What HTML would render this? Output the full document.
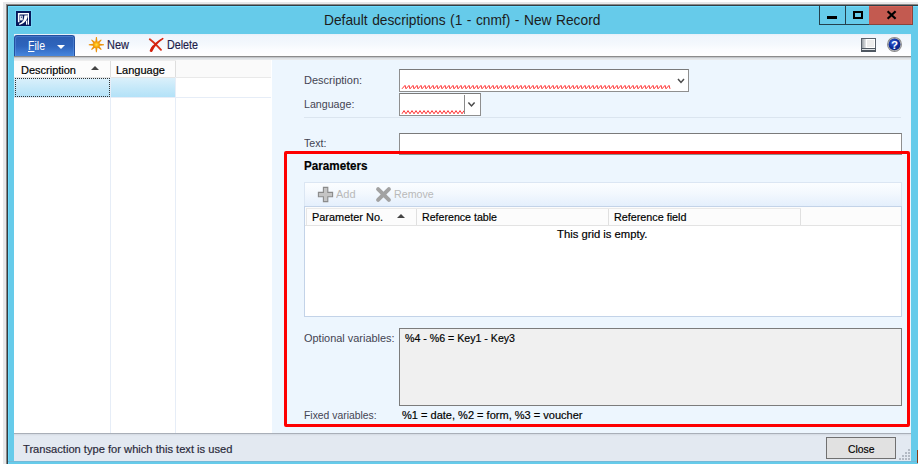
<!DOCTYPE html>
<html>
<head>
<meta charset="utf-8">
<title>Default descriptions (1 - cnmf) - New Record</title>
<style>
html,body{margin:0;padding:0;}
body{width:918px;height:466px;position:relative;overflow:hidden;background:#fff;
  font-family:"Liberation Sans",sans-serif;font-size:11px;color:#000;-webkit-text-stroke:0.18px;}
.a{position:absolute;}
.t{position:absolute;white-space:nowrap;line-height:14px;height:14px;}
#f1{left:3px;top:2px;width:915px;height:462px;background:#e7e8ea;}
#f2{left:6px;top:4px;width:912px;height:460px;background:#8c8987;}
#f3{left:7px;top:5px;width:911px;height:459px;background:#2e3d45;}
#f4{left:8px;top:6px;width:910px;height:458px;background:#6edcff;}
#f5{left:9px;top:7px;width:909px;height:457px;background:#66cbea;}
#fb{left:8px;top:461px;width:910px;height:1px;background:#74b9d8;}
#content{left:14px;top:34px;width:897px;height:427px;background:#fff;}
/* title bar */
#appicon{left:16px;top:11px;width:15px;height:15px;background:#0b1a5c;}
#t_title{word-spacing:0.7px;left:324px;top:10.8px;font-size:14.5px;line-height:18px;height:18px;color:#1c1c1c;}
.wb{position:absolute;top:6px;height:19px;border:1px solid #24414d;border-top:none;box-sizing:border-box;}
#wmin{left:819px;width:27px;}
#wmax{left:845px;width:25px;}
#wclose{left:869px;width:44px;background:#c35a50;border-color:#8a443c;border-left:none;box-shadow:inset 0 1px 0 #d66257,inset -1px 0 0 #d66257;}
/* toolbar */
#toolbar{left:14px;top:34px;width:897px;height:22px;background:linear-gradient(to bottom,#e6eff9 0,#eff5fc 2px,#f4f8fd 45%,#fcfdff 75%,#fff 100%);}
#tbshadow{left:14px;top:56px;width:897px;height:4px;background:linear-gradient(to bottom,#8c8c8c 0,#8c8c8c 1px,#c4c6c9 1px,#c4c6c9 2px,#dfe2e5 2px,#dfe2e5 3px,#e6e8ea 3px);z-index:3;}
#file{left:14px;top:35px;width:61px;height:21px;border-radius:3px 3px 0 0;box-sizing:border-box;border:1px solid #2350a0;border-bottom:none;
  background:linear-gradient(to bottom,#2c5eb2 0,#2e64bc 50%,#3f7cd4 85%,#4686dc 100%);box-shadow:inset 1px 1px 0 rgba(120,170,240,.35),inset -1px 0 0 rgba(120,170,240,.35);}
#t_file{font-size:12px;left:27.8px;top:38.60px;color:#fff;}
#t_new{font-size:12px;left:107.4px;top:37.80px;color:#1e1e4a;}
#t_delete{font-size:12px;left:167px;top:37.80px;color:#1e1e4a;}
/* left grid */
#lgrid{left:14px;top:59px;width:257px;height:374px;background:#fff;}
#lhead{left:14px;top:60px;width:161px;height:17px;background:#fcfcfc;border-bottom:1px solid #e4e4e4;}
#lhead2{left:176px;top:60px;width:95px;height:17px;background:#fafafa;border-bottom:1px solid #e9e9e9;}
.vl{position:absolute;width:1px;background:#e6edf7;}
.hl{position:absolute;height:1px;background:#e6edf7;}
#selrow{left:14px;top:78px;width:161px;height:19px;background:linear-gradient(to bottom,#dbf0fb 0,#c4e8f9 55%,#b3e2f8 100%);}
#focus{left:15px;top:78px;width:95px;height:19px;box-sizing:border-box;border:1px dotted #333;}
/* right pane */
#rpane{left:272px;top:59px;width:639px;height:374px;background:#edf6fe;}
.lbl{color:#444452;-webkit-text-stroke:0;}
#t_title,#t_add,#t_remove,#t_file{-webkit-text-stroke:0;}
.inp{position:absolute;box-sizing:border-box;background:#fff;border:1px solid #8f8f8f;border-top-color:#7a7a7a;}
#redbox{left:284px;top:151px;width:626px;height:276px;box-sizing:border-box;border:3px solid #fe0000;border-radius:2px;}
#ptool{left:304px;top:182px;width:598px;height:25px;box-sizing:border-box;border:1px solid #dbe6f3;border-bottom-color:#b9cde6;
  background:linear-gradient(to bottom,#fbfdff 0,#f3f8fe 45%,#e4effc 100%);}
#pgrid{left:304px;top:206px;width:598px;height:111px;box-sizing:border-box;border:1px solid #c3d3e8;background:#fff;}
#phead{left:305px;top:207px;width:596px;height:18px;background:#fcfcfc;border-bottom:1px solid #e3e3e3;}
.hv{position:absolute;top:208px;height:17px;width:1px;background:#e0e0e0;}
#opt{left:399px;top:328px;width:503px;height:78px;background:#f0f0f0;border:1px solid #7c7c7c;box-sizing:border-box;}
/* status bar */
#sline{left:14px;top:433px;width:897px;height:1px;background:#a9afb8;}
#status{left:14px;top:434px;width:897px;height:27px;background:linear-gradient(to bottom,#d3d9e2 0,#e3e9f1 2px,#e3e9f1 100%);}
#closebtn{left:826px;top:437px;width:70px;height:22px;box-sizing:border-box;border:1px solid #707070;background:#e1e1e1;}
#botwhite{left:0;top:464px;width:918px;height:2px;background:#fff;}
/*SCALES*/
#t_title{transform-origin:0 0;transform:scaleX(0.9499);}
#t_file{transform-origin:0 0;transform:scaleX(0.8781);}
#t_new{transform-origin:0 0;transform:scaleX(0.9119);}
#t_delete{transform-origin:0 0;transform:scaleX(0.8937);}
#t_hdesc{transform-origin:0 0;transform:scaleX(0.9994);}
#t_hlang{transform-origin:0 0;transform:scaleX(1.0010);}
#t_ldesc{transform-origin:0 0;transform:scaleX(1.0004);}
#t_llang{transform-origin:0 0;transform:scaleX(0.9683);}
#t_ltext{transform-origin:0 0;transform:scaleX(0.9684);}
#t_params{transform-origin:0 0;transform:scaleX(0.9338);}
#t_add{transform-origin:0 0;transform:scaleX(1.0011);}
#t_remove{transform-origin:0 0;transform:scaleX(0.9703);}
#t_pno{transform-origin:0 0;transform:scaleX(0.9926);}
#t_rtab{transform-origin:0 0;transform:scaleX(0.9656);}
#t_rfld{transform-origin:0 0;transform:scaleX(0.9797);}
#t_empty{transform-origin:0 0;transform:scaleX(1.0233);}
#t_lopt{transform-origin:0 0;transform:scaleX(0.9944);}
#t_optv{transform-origin:0 0;transform:scaleX(0.9646);}
#t_lfix{transform-origin:0 0;transform:scaleX(0.9423);}
#t_fixv{transform-origin:0 0;transform:scaleX(1.0023);}
#t_status{transform-origin:0 0;transform:scaleX(1.0123);}
#t_close{transform-origin:0 0;transform:scaleX(0.9422);}
/*ENDSCALES*/
</style>
</head>
<body>
<div class="a" id="f1"></div><div class="a" id="f2"></div><div class="a" id="f3"></div><div class="a" id="f4"></div><div class="a" id="f5"></div>
<div class="a" id="content"></div>

<!-- title bar -->
<div class="a" id="appicon"></div>
<div class="t" id="t_title">Default descriptions (1 - cnmf) - New Record</div>
<div class="wb" id="wmin"></div>
<div class="wb" id="wmax"></div>
<div class="wb" id="wclose"></div>

<!-- toolbar -->
<div class="a" id="toolbar"></div>
<div class="a" id="tbshadow"></div>
<div class="a" id="file"></div>
<div class="t" id="t_file"><u>F</u>ile</div>
<div class="t" id="t_new">New</div>
<div class="t" id="t_delete">Delete</div>

<!-- left grid -->
<div class="a" id="lgrid"></div>
<div class="a" id="lhead"></div>
<div class="a" id="lhead2"></div>
<div class="a" id="selrow"></div>
<div class="a" id="focus"></div>
<div class="t" id="t_hdesc" style="left:21px;top:62.85px;">Description</div>
<div class="t" id="t_hlang" style="left:116px;top:62.85px;">Language</div>

<!-- right pane -->
<div class="a" id="rpane"></div>
<div class="t lbl" id="t_ldesc" style="left:304px;top:72.95px;">Description:</div>
<div class="t lbl" id="t_llang" style="left:304px;top:96.85px;">Language:</div>
<div class="inp" style="left:399px;top:69px;width:290px;height:23px;"></div>
<div class="inp" style="left:399px;top:93px;width:82px;height:23px;"></div>
<div class="hl" style="left:304px;top:117px;width:597px;background:#dbe5ef;"></div>
<div class="t lbl" id="t_ltext" style="left:304px;top:136.35px;">Text:</div>
<div class="inp" style="left:399px;top:133px;width:503px;height:22px;"></div>
<div class="a" id="redbox"></div>
<div class="t" id="t_params" style="left:304px;top:159px;font-size:12.5px;font-weight:bold;color:#000;">Parameters</div>
<div class="a" id="ptool"></div>
<div class="t" id="t_add" style="left:336px;top:186.75px;color:#b9b9b9;">Add</div>
<div class="t" id="t_remove" style="left:394px;top:186.95px;color:#b9b9b9;">Remove</div>
<div class="a" id="pgrid"></div>
<div class="a" id="phead"></div>
<div class="hv" style="left:416px;"></div>
<div class="hv" style="left:608px;"></div>
<div class="hv" style="left:800px;"></div>
<div class="t" id="t_pno" style="left:312px;top:210.2px;">Parameter No.</div>
<div class="t" id="t_rtab" style="left:422px;top:210.2px;">Reference table</div>
<div class="t" id="t_rfld" style="left:614px;top:210.2px;">Reference field</div>
<div class="t" id="t_empty" style="left:557px;top:226.95px;">This grid is empty.</div>
<div class="t lbl" id="t_lopt" style="left:304px;top:330.75px;">Optional variables:</div>
<div class="a" id="opt"></div>
<div class="t" id="t_optv" style="left:405px;top:330.85px;">%4 - %6 = Key1 - Key3</div>
<div class="t lbl" id="t_lfix" style="left:304px;top:407.85px;">Fixed variables:</div>
<div class="t" id="t_fixv" style="left:402px;top:407.85px;">%1 = date, %2 = form, %3 = voucher</div>


<!-- app icon glyph -->
<svg class="a" style="left:16px;top:11px;box-shadow:0 0 0 1px rgba(125,222,252,.55)" width="15" height="15" viewBox="0 0 15 15">
 <rect x="0" y="0" width="15" height="15" fill="#06185a"/>
 <path d="M1.9 1.9H13V9H12V3.5H3.5V11.2H1.9Z" fill="#fff"/>
 <rect x="3.9" y="4.6" width="2.9" height="4.8" fill="#e4e8f1"/>
 <rect x="4.9" y="5.6" width="1" height="1.2" fill="#1b2c6c"/>
 <path d="M11.9 4.2C11.5 8.8 8.6 12.6 3.3 13.9L3 12.7C6.6 11.4 8.4 8.8 8.3 4.6Z" fill="#fff"/>
 <rect x="10" y="9.6" width="1.2" height="4.1" fill="#fff"/>
 <rect x="11.8" y="9" width="1.2" height="4.7" fill="#fff"/>
</svg>
<!-- window button glyphs -->
<div class="a" style="left:827px;top:16px;width:10px;height:3px;background:#000"></div>
<div class="a" style="left:853px;top:11px;width:10px;height:8px;box-sizing:border-box;border:2px solid #000"></div>
<svg class="a" style="left:886px;top:10px" width="12" height="10" viewBox="0 0 12 10">
 <path d="M1.6 1.2L9.6 8.8M9.6 1.2L1.6 8.8" stroke="#000" stroke-width="2.2" fill="none"/>
</svg>
<!-- File arrow -->
<svg class="a" style="left:57px;top:45px" width="8" height="4" viewBox="0 0 8 4"><path d="M0 0H8L4 4Z" fill="#fff"/></svg>
<!-- New icon -->
<svg class="a" style="left:88px;top:36px" width="17" height="17" viewBox="0 0 17 17">
 <defs><radialGradient id="sg" cx="50%" cy="50%" r="50%"><stop offset="0" stop-color="#ffe24d"/><stop offset=".5" stop-color="#fdb913"/><stop offset="1" stop-color="#ee9408"/></radialGradient></defs>
 <g transform="translate(8.4 8.7)" fill="#ec9208">
  <path d="M-0.45 -7.6L0.45 -7.6L1.3 -1.5L-1.3 -1.5Z"/>
  <path d="M-0.45 -7.6L0.45 -7.6L1.3 -1.5L-1.3 -1.5Z" transform="rotate(90)"/>
  <path d="M-0.45 -7.6L0.45 -7.6L1.3 -1.5L-1.3 -1.5Z" transform="rotate(180)"/>
  <path d="M-0.45 -7.6L0.45 -7.6L1.3 -1.5L-1.3 -1.5Z" transform="rotate(270)"/>
  <path d="M-0.45 -7L0.45 -7L1.3 -1.5L-1.3 -1.5Z" transform="rotate(45)"/>
  <path d="M-0.45 -7L0.45 -7L1.3 -1.5L-1.3 -1.5Z" transform="rotate(135)"/>
  <path d="M-0.45 -7L0.45 -7L1.3 -1.5L-1.3 -1.5Z" transform="rotate(225)"/>
  <path d="M-0.45 -7L0.45 -7L1.3 -1.5L-1.3 -1.5Z" transform="rotate(315)"/>
  <circle r="3.3" fill="url(#sg)"/>
 </g>
</svg>
<!-- Delete icon -->
<svg class="a" style="left:148px;top:37px" width="17" height="16" viewBox="0 0 17 16">
 <path d="M1.8 2.2C5.5 5 9.5 9 13 12.8" stroke="#d8301a" stroke-width="1.9" fill="none" stroke-linecap="round"/>
 <path d="M14.8 1.6C10 4 5 8.6 2.4 13.8L3.6 14.2C5.6 9.4 10 4.8 14.8 1.6Z" fill="#d4200c" stroke="#d4200c" stroke-width="1.5" stroke-linejoin="round"/>
 <path d="M3 13.6C3.4 12 4.2 10.6 5.2 9.4" stroke="#d4200c" stroke-width="2" fill="none" stroke-linecap="round"/>
</svg>
<!-- layout icon -->
<div class="a" style="left:861px;top:38px;width:15px;height:14px;box-sizing:border-box;border:1px solid #59616b;background:#fff"></div>
<div class="a" style="left:862px;top:39px;width:4px;height:9px;background:linear-gradient(to right,#9aa0a6,#e6e8ea)"></div>
<div class="a" style="left:867px;top:40px;width:7px;height:7px;background:#ededed"></div>
<div class="a" style="left:861px;top:48px;width:15px;height:4px;background:#4f5862"></div>
<div class="a" style="left:862px;top:49px;width:13px;height:1px;background:#dfe3e6"></div>
<!-- help icon -->
<svg class="a" style="left:886px;top:36px" width="17" height="17" viewBox="0 0 17 17">
 <defs><radialGradient id="hg" cx="40%" cy="35%" r="65%"><stop offset="0" stop-color="#3a63d8"/><stop offset=".6" stop-color="#0f2fa0"/><stop offset="1" stop-color="#0a2382"/></radialGradient></defs>
 <circle cx="8.5" cy="8.4" r="7.5" fill="#878787"/><circle cx="8.5" cy="8.4" r="6.7" fill="#b4b4b4"/>
 <circle cx="8.5" cy="8.4" r="5.9" fill="url(#hg)"/>
 <text x="8.5" y="12.6" text-anchor="middle" font-family="Liberation Sans, sans-serif" font-weight="bold" font-size="11.5" fill="#fff">?</text>
</svg>
<!-- sort arrows -->
<svg class="a" style="left:91px;top:66px" width="8" height="4" viewBox="0 0 8 4"><path d="M0 4H8L4 0Z" fill="#444"/></svg>
<svg class="a" style="left:397px;top:214px" width="8" height="4" viewBox="0 0 8 4"><path d="M0 4H8L4 0Z" fill="#444"/></svg>
<!-- left grid lines -->
<div class="vl" style="left:110px;top:60px;height:373px;"></div>
<div class="vl" style="left:175px;top:60px;height:373px;"></div>
<div class="hl" style="left:14px;top:97px;width:257px;"></div>


<!-- wavy underlines, chevrons -->
<svg class="a" style="left:399px;top:69px" width="300" height="50" viewBox="399 69 300 50">
 <polyline points="402,88.8 405,85.4 406,88.8 409,85.4 410,88.8 413,85.4 414,88.8 417,85.4 418,88.8 421,85.4 422,88.8 425,85.4 426,88.8 429,85.4 430,88.8 433,85.4 434,88.8 437,85.4 438,88.8 441,85.4 442,88.8 445,85.4 446,88.8 449,85.4 450,88.8 453,85.4 454,88.8 457,85.4 458,88.8 461,85.4 462,88.8 465,85.4 466,88.8 469,85.4 470,88.8 473,85.4 474,88.8 477,85.4 478,88.8 481,85.4 482,88.8 485,85.4 486,88.8 489,85.4 490,88.8 493,85.4 494,88.8 497,85.4 498,88.8 501,85.4 502,88.8 505,85.4 506,88.8 509,85.4 510,88.8 513,85.4 514,88.8 517,85.4 518,88.8 521,85.4 522,88.8 525,85.4 526,88.8 529,85.4 530,88.8 533,85.4 534,88.8 537,85.4 538,88.8 541,85.4 542,88.8 545,85.4 546,88.8 549,85.4 550,88.8 553,85.4 554,88.8 557,85.4 558,88.8 561,85.4 562,88.8 565,85.4 566,88.8 569,85.4 570,88.8 573,85.4 574,88.8 577,85.4 578,88.8 581,85.4 582,88.8 585,85.4 586,88.8 589,85.4 590,88.8 593,85.4 594,88.8 597,85.4 598,88.8 601,85.4 602,88.8 605,85.4 606,88.8 609,85.4 610,88.8 613,85.4 614,88.8 617,85.4 618,88.8 621,85.4 622,88.8 625,85.4 626,88.8 629,85.4 630,88.8 633,85.4 634,88.8 637,85.4 638,88.8 641,85.4 642,88.8 645,85.4 646,88.8 649,85.4 650,88.8 653,85.4 654,88.8 657,85.4 658,88.8 661,85.4 662,88.8 665,85.4 666,88.8 669,85.4 670,88.8" fill="none" stroke="#ff3030" stroke-width="1"/>
 <polyline points="402,113.8 404,110.6 406,113.8 408,110.6 410,113.8 412,110.6 414,113.8 416,110.6 418,113.8 420,110.6 422,113.8 424,110.6 426,113.8 428,110.6 430,113.8 432,110.6 434,113.8 436,110.6 438,113.8 440,110.6 442,113.8 444,110.6 446,113.8 448,110.6 450,113.8 452,110.6 454,113.8 456,110.6 458,113.8 460,110.6 462,113.8 464,110.6" fill="none" stroke="#ff3030" stroke-width="1"/>
 <path d="M678 79L681 82.4L684 79" fill="none" stroke="#4a4a4a" stroke-width="1.5"/>
 <path d="M468.4 102.6L471.5 106L474.6 102.6" fill="none" stroke="#4a4a4a" stroke-width="1.5"/>
 <rect x="464" y="95" width="1" height="19" fill="#8a8a8a"/>
</svg>
<!-- Add / Remove icons -->
<svg class="a" style="left:317px;top:186px" width="17" height="17" viewBox="317 186 17 17">
 <path d="M323.4 187.4H327.8V192.4H332.6V196.8H327.8V201.6H323.4V196.8H318.4V192.4H323.4Z" fill="#c4c4c4" stroke="#8a8a8a" stroke-width="1.1"/>
</svg>
<svg class="a" style="left:375px;top:186px" width="17" height="17" viewBox="375 186 17 17">
 <path d="M378.1 189.1L388.9 199.9M388.9 189.1L378.1 199.9" stroke="#a2a2a2" stroke-width="4" stroke-linecap="round" fill="none"/>
</svg>
<!-- resize grip -->
<svg class="a" style="left:899px;top:449px;z-index:5" width="12" height="12" viewBox="0 0 12 12" fill="#b3bac4">
 <rect x="9" y="0" width="2" height="2"/><rect x="6" y="3" width="2" height="2"/><rect x="9" y="3" width="2" height="2"/>
 <rect x="3" y="6" width="2" height="2"/><rect x="6" y="6" width="2" height="2"/><rect x="9" y="6" width="2" height="2"/>
 <rect x="0" y="9" width="2" height="2"/><rect x="3" y="9" width="2" height="2"/><rect x="6" y="9" width="2" height="2"/><rect x="9" y="9" width="2" height="2"/>
</svg>
<div class="a" style="left:916.5px;top:450px;width:1.5px;height:13px;background:#8a3a12;z-index:5"></div>

<div class="hl" style="left:306px;top:208px;width:495px;background:#e9e9e9;"></div>
<div class="vl" style="left:306px;top:208px;height:17px;background:#e6e6e6;"></div>
<div class="hl" style="left:14px;top:60px;width:162px;background:#eeeeee;"></div>
<div class="vl" style="left:110px;top:61px;height:16px;background:#dedede;"></div>
<div class="vl" style="left:175px;top:61px;height:16px;background:#dedede;"></div>
<!-- status bar -->
<div class="a" id="sline"></div>
<div class="a" id="status"></div>
<div class="t" id="t_status" style="left:23.4px;top:442.15px;color:#2a2a3a;">Transaction type for which this text is used</div>
<div class="a" id="closebtn"></div>
<div class="t" id="t_close" style="left:847.5px;top:442.15px;">Close</div>
<div class="a" id="fb"></div>
<div class="a" id="botwhite"></div>
</body>
</html>
